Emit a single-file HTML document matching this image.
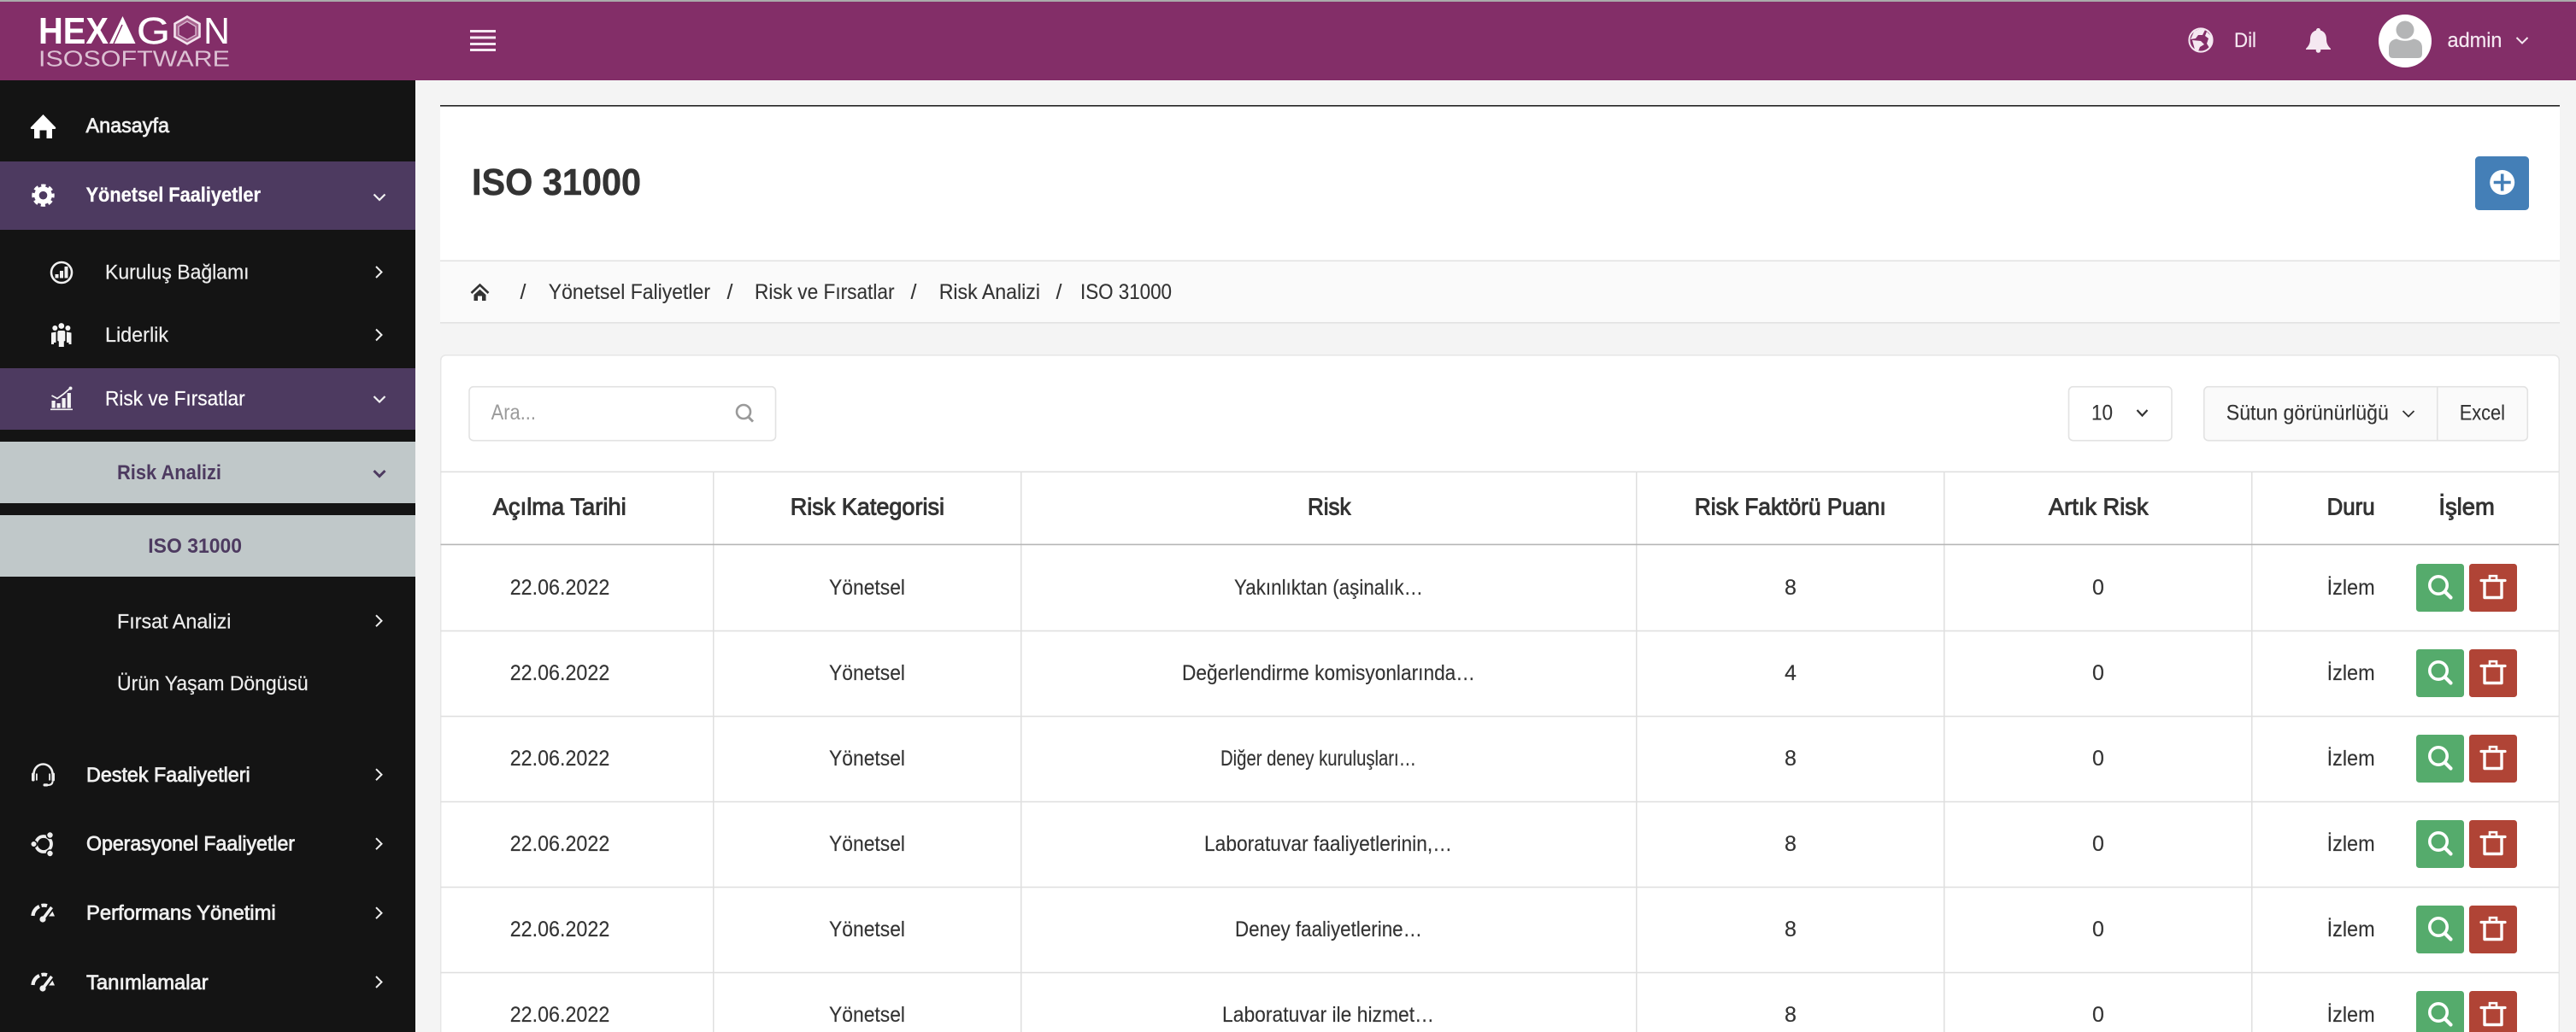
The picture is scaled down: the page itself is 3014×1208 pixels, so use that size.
<!DOCTYPE html>
<html lang="tr">
<head>
<meta charset="utf-8">
<title>ISO 31000</title>
<style>
html,body{margin:0;padding:0;background:#f4f4f4;width:3014px;height:1208px;overflow:hidden}
svg{display:block}
text{font-family:"Liberation Sans",sans-serif;white-space:pre}
.nav{font-size:24px;fill:#f0f0f0;stroke:#f0f0f0;stroke-width:.75}
.sub{font-size:24px;fill:#ededed;stroke:#ededed;stroke-width:.2}
.act{font-size:24px;fill:#fff;stroke:#fff;stroke-width:.3}
.gr{font-size:24.5px;fill:#4d3a60;font-weight:bold}
.top{font-size:24px;fill:#f5e8f1;stroke:#f5e8f1;stroke-width:.2}
.bc{font-size:25px;fill:#333;stroke:#333;stroke-width:.12}
.th{font-size:27.5px;fill:#333;stroke:#333;stroke-width:.95}
.td{font-size:25px;fill:#333;stroke:#333;stroke-width:.15}
.tb{font-size:25px;fill:#333;stroke:#333;stroke-width:.12}
</style>
</head>
<body>
<svg xmlns="http://www.w3.org/2000/svg" width="3014" height="1208" viewBox="0 0 3014 1208">
<defs>
  <g id="cr"><path d="M-3-6.5 3.5 0-3 6.5" fill="none" stroke="#eee" stroke-width="2"/></g>
  <g id="cd"><path d="M-6.5-3 0 3.5 6.5-3" fill="none" stroke="#f2f2f2" stroke-width="2.2"/></g>
  <g id="gauge" fill="none">
    <path d="M38.5 1072A12.8 12.8 0 0 1 46 1061M48.5 1060A12.8 12.8 0 0 1 55 1060.3" stroke="#f0f0f0" stroke-width="4.2"/>
    <path d="M60 1063.5 64 1072.5 55.5 1072.5Z" fill="#f0f0f0"/>
    <path d="M50 1076 61.5 1061" stroke="#141414" stroke-width="7"/>
    <path d="M50 1076 60.5 1062" stroke="#f0f0f0" stroke-width="3.6"/>
    <circle cx="50" cy="1076" r="3.6" fill="#f0f0f0"/>
  </g>
  <g id="acts">
    <rect x="2827" y="660" width="56" height="56" rx="3.5" fill="#55ab6c"/>
    <rect x="2889" y="660" width="56" height="56" rx="3.5" fill="#b04436"/>
    <circle cx="2853" cy="685" r="10.2" fill="none" stroke="#fff" stroke-width="3.6"/>
    <path d="M2861 693 2867.5 699.5" stroke="#fff" stroke-width="4.2" stroke-linecap="round"/>
    <path d="M2903 679.5H2931" stroke="#fff" stroke-width="3.2" stroke-linecap="round"/>
    <path d="M2913 678V674.2H2921V678" fill="none" stroke="#fff" stroke-width="2.6"/>
    <path d="M2907 680V699.5H2927V680" fill="none" stroke="#fff" stroke-width="3.4" stroke-linejoin="round"/>
  </g>
</defs>

<!-- page -->
<rect width="3014" height="1208" fill="#f4f4f4"/>

<!-- top bar -->
<rect y="0" width="3014" height="94" fill="#832e68"/>
<rect y="0" width="3014" height="2" fill="#ababab"/>

<!-- logo -->
<text x="45" y="51" font-size="44" font-weight="bold" fill="#fff" textLength="82" lengthAdjust="spacingAndGlyphs">HEX</text>
<path d="M143.5 19 158.5 51H128Z" fill="#fff"/>
<path d="M133 51 143 29" stroke="#832e68" stroke-width="1.5"/>
<text x="160" y="51" font-size="44" fill="#fff" stroke="#fff" stroke-width=".4" textLength="39" lengthAdjust="spacingAndGlyphs">G</text>
<path d="M219 19.5 233.5 27.7V43L219 51.3 204.5 43V27.7Z" fill="#a8648f" stroke="#f3e4ee" stroke-width="2.6"/>
<path d="M219 25 229 31V41L219 46.5 209 41V31Z" fill="#832e68" stroke="#d9b7cf" stroke-width="1.4"/>
<text x="238" y="51" font-size="44" fill="#fff" textLength="31" lengthAdjust="spacingAndGlyphs">N</text>
<text x="45" y="77.5" font-size="26" fill="#dcc0d3" textLength="224" lengthAdjust="spacingAndGlyphs">ISOSOFTWARE</text>

<!-- hamburger -->
<g fill="#f5e8f1">
  <rect x="550" y="35" width="30" height="3"/>
  <rect x="550" y="42.5" width="30" height="3"/>
  <rect x="550" y="50" width="30" height="3"/>
  <rect x="550" y="57" width="30" height="3"/>
</g>

<!-- top right -->
<circle cx="2575" cy="47" r="13.6" fill="none" stroke="#f5e8f1" stroke-width="2"/>
<g fill="#f5e8f1">
  <path d="M2567 37Q2573 33 2580 35L2577 41 2572 41 2569 45 2563 46Z"/>
  <path d="M2565 47 2575 48 2579 52 2574 55 2572 60 2568 58Z"/>
  <path d="M2582 37 2587 42 2589 49 2585 56 2582 51 2584 45 2580 42Z"/>
</g>
<text class="top" x="2614" y="55" textLength="26" lengthAdjust="spacingAndGlyphs">Dil</text>
<path d="M2712.5 33C2714 33 2715 34 2715 35.5 2720 37 2722 41 2722 46 2722 51 2724 54 2727 57V58H2698V57C2701 54 2703 51 2703 46 2703 41 2705 37 2710 35.5 2710 34 2711 33 2712.5 33Z" fill="#f5e8f1"/>
<circle cx="2712.5" cy="59" r="2.8" fill="#f5e8f1"/>
<circle cx="2814" cy="48" r="31" fill="#fff"/>
<circle cx="2814" cy="35" r="10.5" fill="#b4b5b6"/>
<path d="M2804 45.5Q2814 50 2824 45.5 2834 47 2834 56V63Q2834 68 2829 68H2800Q2795 68 2795 63V56Q2795 47 2804 45.5Z" fill="#b4b5b6"/>
<text class="top" x="2863.5" y="55" textLength="64" lengthAdjust="spacingAndGlyphs">admin</text>
<path d="M2944.5 44 2951 50.5 2957.5 44" fill="none" stroke="#f5e8f1" stroke-width="2"/>

<!-- sidebar -->
<rect x="0" y="94" width="486" height="1114" fill="#141414"/>
<rect x="0" y="189" width="486" height="80" fill="#4d3a60"/>
<rect x="0" y="431" width="486" height="72" fill="#4d3a60"/>
<rect x="0" y="517" width="486" height="72" fill="#c0c8c9"/>
<rect x="0" y="603" width="486" height="72" fill="#c0c8c9"/>

<!-- sidebar icons -->
<path d="M50.5 134 65 149Q66 151 63.5 151H61V162H54.5V152.5H46.5V162H40V151H37.5Q35 151 36 149Z" fill="#fff"/>
<circle cx="50.5" cy="228.7" r="7.6" fill="none" stroke="#fff" stroke-width="5.6"/>
<circle cx="50.5" cy="228.7" r="11" fill="none" stroke="#fff" stroke-width="4.4" stroke-dasharray="5 3.64" stroke-dashoffset="2.5"/>

<circle cx="72" cy="319" r="12" fill="none" stroke="#f0f0f0" stroke-width="2.6"/>
<g fill="#f0f0f0">
  <rect x="64.5" y="321" width="4" height="4.5"/>
  <rect x="70" y="317" width="4" height="8.5"/>
  <rect x="75.5" y="312" width="4" height="13.5"/>
</g>

<g fill="#f4f4f4">
  <circle cx="64.3" cy="384" r="3"/>
  <circle cx="79.4" cy="384" r="3"/>
  <circle cx="71.8" cy="381.5" r="3.4"/>
  <path d="M60 389.5 65.5 388.5V401H63V403H60Z"/>
  <path d="M78 388.5 83.5 389.5V403H80.5V401H78Z"/>
  <path d="M68.3 387H75.3L76.3 388.5V399L74.8 399.5V406H68.8V399.5L67.3 399V388.5Z"/>
</g>

<g fill="#f4f4f4">
  <rect x="59" y="478.5" width="26" height="1.6"/>
  <rect x="60.5" y="469" width="4.2" height="8.5"/>
  <rect x="66.5" y="472" width="4.2" height="5.5"/>
  <rect x="72.5" y="466" width="4.2" height="11.5"/>
  <rect x="78.7" y="460" width="4.2" height="17.5"/>
  <path d="M60.5 463 67 466.5 74 461.5 82 454.5" fill="none" stroke="#f4f4f4" stroke-width="1.8"/>
  <circle cx="82.5" cy="454.5" r="2"/>
</g>

<g fill="none" stroke="#eee">
  <path d="M39.5 906A11 11.5 0 0 1 61.5 906" stroke-width="2.6"/>
  <path d="M61.5 914.5Q61.5 919 56 919" stroke-width="2"/>
</g>
<g fill="#eee">
  <rect x="37" y="904.5" width="3.6" height="10" rx="1.6"/>
  <rect x="42" y="905.5" width="1.8" height="8"/>
  <rect x="60.4" y="904.5" width="3.6" height="10" rx="1.6"/>
  <rect x="57.2" y="905.5" width="1.8" height="8"/>
  <rect x="50.5" y="917.3" width="6" height="3.2" rx="1.6"/>
</g>

<circle cx="51" cy="988" r="9" fill="none" stroke="#eee" stroke-width="3.8"/>
<g stroke="#141414" stroke-width="1.6" fill="#eee">
  <circle cx="39.5" cy="988" r="3.8"/>
  <circle cx="58.5" cy="977.5" r="4"/>
  <circle cx="58.5" cy="999" r="4"/>
</g>

<use href="#gauge"/>
<use href="#gauge" y="81"/>

<!-- sidebar text -->
<text class="nav" x="100.5" y="155" textLength="97.5" lengthAdjust="spacingAndGlyphs">Anasayfa</text>
<text class="act" x="100.5" y="236" font-weight="bold" textLength="204.5" lengthAdjust="spacingAndGlyphs">Yönetsel Faaliyetler</text>
<text class="sub" x="123" y="326.5" textLength="168.5" lengthAdjust="spacingAndGlyphs">Kuruluş Bağlamı</text>
<text class="sub" x="123" y="400" textLength="74" lengthAdjust="spacingAndGlyphs">Liderlik</text>
<text class="sub" x="123" y="474.5" style="fill:#fff;stroke:#fff" textLength="163.7" lengthAdjust="spacingAndGlyphs">Risk ve Fırsatlar</text>
<text class="gr" x="137" y="561" textLength="122" lengthAdjust="spacingAndGlyphs">Risk Analizi</text>
<text class="gr" x="173.3" y="647" textLength="109.7" lengthAdjust="spacingAndGlyphs">ISO 31000</text>
<text class="sub" x="137" y="735.7" textLength="133.5" lengthAdjust="spacingAndGlyphs">Fırsat Analizi</text>
<text class="sub" x="137" y="808" textLength="223.7" lengthAdjust="spacingAndGlyphs">Ürün Yaşam Döngüsü</text>
<text class="nav" x="101" y="915" textLength="191.7" lengthAdjust="spacingAndGlyphs">Destek Faaliyetleri</text>
<text class="nav" x="101" y="995.7" textLength="244" lengthAdjust="spacingAndGlyphs">Operasyonel Faaliyetler</text>
<text class="nav" x="101" y="1076.7" textLength="221.7" lengthAdjust="spacingAndGlyphs">Performans Yönetimi</text>
<text class="nav" x="101" y="1158" textLength="142.7" lengthAdjust="spacingAndGlyphs">Tanımlamalar</text>

<!-- sidebar chevrons -->
<use href="#cd" x="444" y="230.5"/>
<use href="#cr" x="443" y="318.5"/>
<use href="#cr" x="443" y="392"/>
<use href="#cd" x="444" y="467"/>
<path d="M437.5 551 444 557.5 450.5 551" fill="none" stroke="#4d3a60" stroke-width="3"/>
<use href="#cr" x="443" y="726.7"/>
<use href="#cr" x="443" y="906.7"/>
<use href="#cr" x="443" y="987.7"/>
<use href="#cr" x="443" y="1068.7"/>
<use href="#cr" x="443" y="1149.5"/>

<!-- title card -->
<rect x="515" y="123" width="2480" height="255" fill="#fff"/>
<rect x="515" y="123" width="2480" height="1.6" fill="#222"/>
<text x="552" y="228" font-size="43.5" font-weight="bold" fill="#333" stroke="#333" stroke-width=".5" textLength="198" lengthAdjust="spacingAndGlyphs">ISO 31000</text>
<rect x="2896" y="183" width="63" height="63" rx="4.5" fill="#447fb7"/>
<circle cx="2927.7" cy="213.5" r="14.5" fill="#fff"/>
<path d="M2927.7 203.5V223.5M2917.7 213.5H2937.7" stroke="#447fb7" stroke-width="3.6"/>

<!-- breadcrumb -->
<rect x="515" y="305" width="2480" height="73" fill="#fafafa"/>
<rect x="515" y="304.5" width="2480" height="1.6" fill="#e2e2e2"/>
<rect x="515" y="377" width="2480" height="1.6" fill="#e2e2e2"/>
<path d="M551.5 343 561.5 333.5 571.5 343" fill="none" stroke="#333" stroke-width="2.6"/>
<path d="M554.5 345 561.5 338.8 568.5 345V352H564V346.5H559V352H554.5Z" fill="#333"/>
<text class="bc" x="612" y="350" text-anchor="middle">/</text>
<text class="bc" x="641.8" y="350" textLength="189.2" lengthAdjust="spacingAndGlyphs">Yönetsel Faliyetler</text>
<text class="bc" x="854" y="350" text-anchor="middle">/</text>
<text class="bc" x="883" y="350" textLength="163.5" lengthAdjust="spacingAndGlyphs">Risk ve Fırsatlar</text>
<text class="bc" x="1069" y="350" text-anchor="middle">/</text>
<text class="bc" x="1098.7" y="350" textLength="118.3" lengthAdjust="spacingAndGlyphs">Risk Analizi</text>
<text class="bc" x="1239" y="350" text-anchor="middle">/</text>
<text class="bc" x="1264" y="350" textLength="107" lengthAdjust="spacingAndGlyphs">ISO 31000</text>

<!-- data card -->
<rect x="515.7" y="415.7" width="2478.6" height="820" rx="6" fill="#fff" stroke="#e6e6e6" stroke-width="1.5"/>

<!-- toolbar -->
<rect x="549" y="452.7" width="358.5" height="63" rx="5" fill="#fff" stroke="#e2e2e2" stroke-width="1.6"/>
<text x="574.6" y="491" font-size="25" fill="#9b9b9b" textLength="52.4" lengthAdjust="spacingAndGlyphs">Ara...</text>
<circle cx="870" cy="482" r="8" fill="none" stroke="#9a9a9a" stroke-width="2.6"/>
<path d="M875.5 488 881 493.5" stroke="#9a9a9a" stroke-width="3"/>

<rect x="2420.5" y="452.7" width="120.5" height="63" rx="5" fill="#fff" stroke="#e2e2e2" stroke-width="1.6"/>
<text class="tb" x="2447" y="491.7" textLength="25" lengthAdjust="spacingAndGlyphs">10</text>
<path d="M2500.5 480 2506.5 486.5 2512.5 480" fill="none" stroke="#333" stroke-width="2.2"/>

<rect x="2578.8" y="452.7" width="378.5" height="63" rx="5" fill="#fafafa" stroke="#e2e2e2" stroke-width="1.6"/>
<rect x="2851" y="453" width="1.5" height="62" fill="#e2e2e2"/>
<text class="tb" x="2604.8" y="491.7" textLength="190" lengthAdjust="spacingAndGlyphs">Sütun görünürlüğü</text>
<path d="M2811.5 481 2818 487.5 2824.5 481" fill="none" stroke="#333" stroke-width="1.8"/>
<text class="tb" x="2877.7" y="491.7" textLength="53.3" lengthAdjust="spacingAndGlyphs">Excel</text>

<!-- table lines -->
<g fill="#dfdfdf">
  <rect x="515.5" y="551.5" width="2478.5" height="1.6"/>
  <rect x="515.5" y="737.7" width="2478.5" height="1.6"/>
  <rect x="515.5" y="837.7" width="2478.5" height="1.6"/>
  <rect x="515.5" y="937.7" width="2478.5" height="1.6"/>
  <rect x="515.5" y="1037.7" width="2478.5" height="1.6"/>
  <rect x="515.5" y="1137.7" width="2478.5" height="1.6"/>
  <rect x="834" y="552" width="1.5" height="656"/>
  <rect x="1194" y="552" width="1.5" height="656"/>
  <rect x="1914" y="552" width="1.5" height="656"/>
  <rect x="2274" y="552" width="1.5" height="656"/>
  <rect x="2634" y="552" width="1.5" height="656"/>
</g>
<rect x="515.5" y="636.6" width="2478.5" height="1.6" fill="#b6b6b6"/>

<!-- table head -->
<text class="th" x="576.7" y="602.7" textLength="156" lengthAdjust="spacingAndGlyphs">Açılma Tarihi</text>
<text class="th" x="924.7" y="602.7" textLength="180.3" lengthAdjust="spacingAndGlyphs">Risk Kategorisi</text>
<text class="th" x="1530" y="602.7" textLength="50.5" lengthAdjust="spacingAndGlyphs">Risk</text>
<text class="th" x="1982.7" y="602.7" textLength="224" lengthAdjust="spacingAndGlyphs">Risk Faktörü Puanı</text>
<text class="th" x="2397" y="602.7" textLength="116.5" lengthAdjust="spacingAndGlyphs">Artık Risk</text>
<text class="th" x="2722.6" y="602.7" textLength="56" lengthAdjust="spacingAndGlyphs">Duru</text>
<text class="th" x="2853.4" y="602.7" textLength="65.4" lengthAdjust="spacingAndGlyphs">İşlem</text>

<!-- row 1 -->
<text class="td" x="596.7" y="696" textLength="116.6" lengthAdjust="spacingAndGlyphs">22.06.2022</text>
<text class="td" x="970" y="696" textLength="89" lengthAdjust="spacingAndGlyphs">Yönetsel</text>
<text class="td" x="1444" y="696" textLength="221" lengthAdjust="spacingAndGlyphs">Yakınlıktan (aşinalık…</text>
<text class="td" x="2095" y="696" text-anchor="middle">8</text>
<text class="td" x="2455" y="696" text-anchor="middle">0</text>
<text class="td" x="2722.6" y="696" textLength="56" lengthAdjust="spacingAndGlyphs">İzlem</text>
<use href="#acts"/>
<!-- row 2 -->
<text class="td" x="596.7" y="796" textLength="116.6" lengthAdjust="spacingAndGlyphs">22.06.2022</text>
<text class="td" x="970" y="796" textLength="89" lengthAdjust="spacingAndGlyphs">Yönetsel</text>
<text class="td" x="1383" y="796" textLength="343" lengthAdjust="spacingAndGlyphs">Değerlendirme komisyonlarında…</text>
<text class="td" x="2095" y="796" text-anchor="middle">4</text>
<text class="td" x="2455" y="796" text-anchor="middle">0</text>
<text class="td" x="2722.6" y="796" textLength="56" lengthAdjust="spacingAndGlyphs">İzlem</text>
<use href="#acts" y="100"/>
<!-- row 3 -->
<text class="td" x="596.7" y="896" textLength="116.6" lengthAdjust="spacingAndGlyphs">22.06.2022</text>
<text class="td" x="970" y="896" textLength="89" lengthAdjust="spacingAndGlyphs">Yönetsel</text>
<text class="td" x="1428" y="896" textLength="229" lengthAdjust="spacingAndGlyphs">Diğer deney kuruluşları…</text>
<text class="td" x="2095" y="896" text-anchor="middle">8</text>
<text class="td" x="2455" y="896" text-anchor="middle">0</text>
<text class="td" x="2722.6" y="896" textLength="56" lengthAdjust="spacingAndGlyphs">İzlem</text>
<use href="#acts" y="200"/>
<!-- row 4 -->
<text class="td" x="596.7" y="996" textLength="116.6" lengthAdjust="spacingAndGlyphs">22.06.2022</text>
<text class="td" x="970" y="996" textLength="89" lengthAdjust="spacingAndGlyphs">Yönetsel</text>
<text class="td" x="1409" y="996" textLength="290" lengthAdjust="spacingAndGlyphs">Laboratuvar faaliyetlerinin,…</text>
<text class="td" x="2095" y="996" text-anchor="middle">8</text>
<text class="td" x="2455" y="996" text-anchor="middle">0</text>
<text class="td" x="2722.6" y="996" textLength="56" lengthAdjust="spacingAndGlyphs">İzlem</text>
<use href="#acts" y="300"/>
<!-- row 5 -->
<text class="td" x="596.7" y="1096" textLength="116.6" lengthAdjust="spacingAndGlyphs">22.06.2022</text>
<text class="td" x="970" y="1096" textLength="89" lengthAdjust="spacingAndGlyphs">Yönetsel</text>
<text class="td" x="1445" y="1096" textLength="219" lengthAdjust="spacingAndGlyphs">Deney faaliyetlerine…</text>
<text class="td" x="2095" y="1096" text-anchor="middle">8</text>
<text class="td" x="2455" y="1096" text-anchor="middle">0</text>
<text class="td" x="2722.6" y="1096" textLength="56" lengthAdjust="spacingAndGlyphs">İzlem</text>
<use href="#acts" y="400"/>
<!-- row 6 -->
<text class="td" x="596.7" y="1196" textLength="116.6" lengthAdjust="spacingAndGlyphs">22.06.2022</text>
<text class="td" x="970" y="1196" textLength="89" lengthAdjust="spacingAndGlyphs">Yönetsel</text>
<text class="td" x="1430" y="1196" textLength="248" lengthAdjust="spacingAndGlyphs">Laboratuvar ile hizmet…</text>
<text class="td" x="2095" y="1196" text-anchor="middle">8</text>
<text class="td" x="2455" y="1196" text-anchor="middle">0</text>
<text class="td" x="2722.6" y="1196" textLength="56" lengthAdjust="spacingAndGlyphs">İzlem</text>
<use href="#acts" y="500"/>
</svg>
</body>
</html>
